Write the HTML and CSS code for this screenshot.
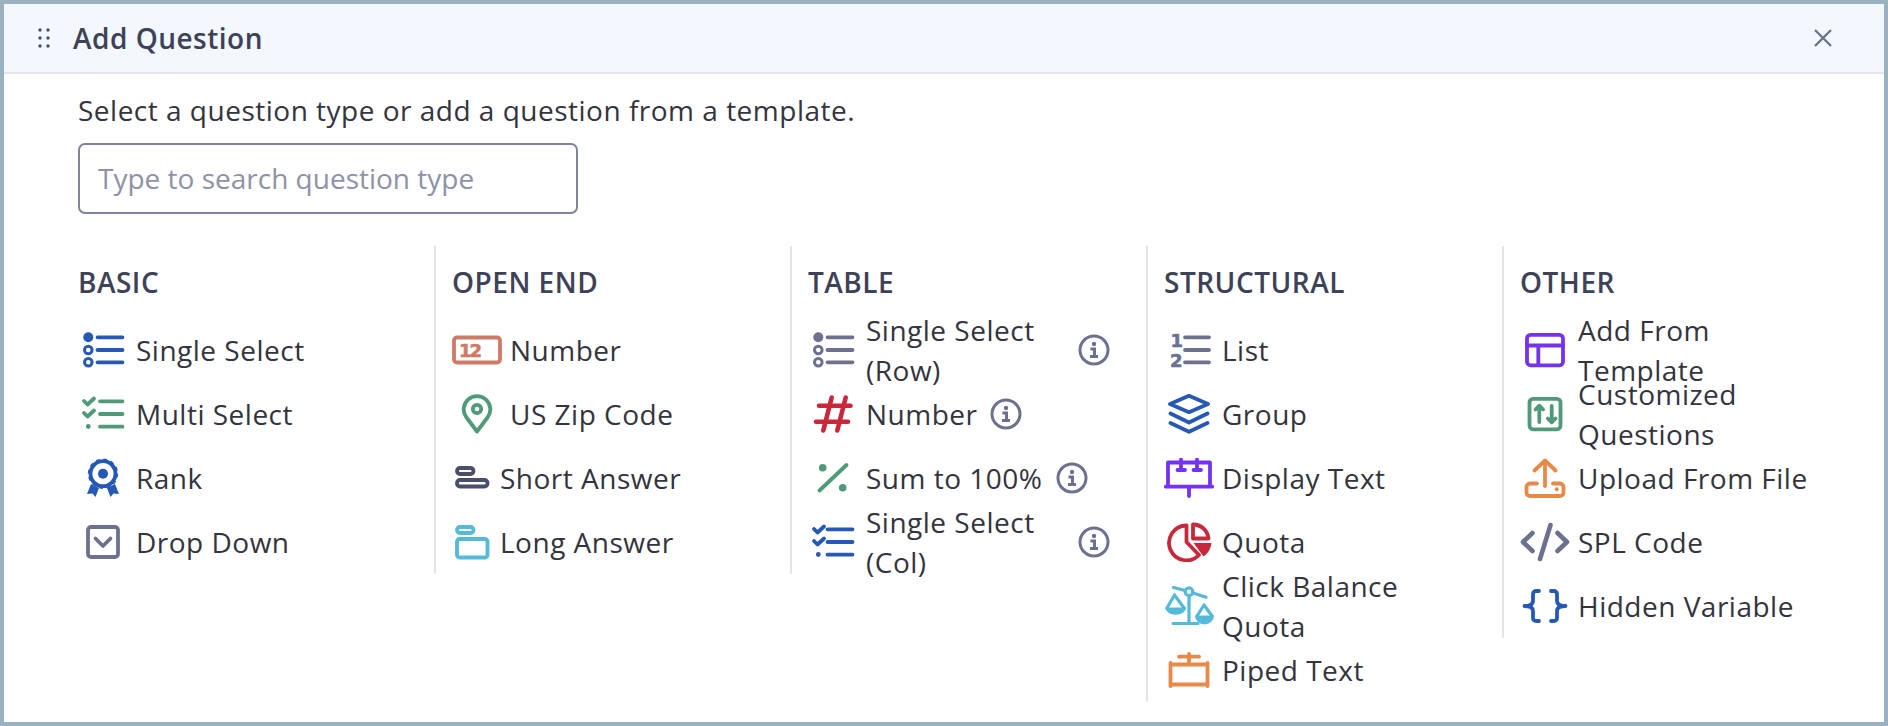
FILE: index.html
```html
<!DOCTYPE html>
<html lang="en">
<head>
<meta charset="utf-8">
<title>Add Question</title>
<link rel="stylesheet" href="styles.css">
</head>
<body>
<section class="dialog">
  <header class="dialog-head">
    <svg class="grip" viewBox="0 0 12 22"><circle class="f" cx="2" cy="3" r="1.7"/><circle class="f" cx="10" cy="3" r="1.7"/><circle class="f" cx="2" cy="11" r="1.7"/><circle class="f" cx="10" cy="11" r="1.7"/><circle class="f" cx="2" cy="19" r="1.7"/><circle class="f" cx="10" cy="19" r="1.7"/></svg>
    <h2 class="dialog-title">Add Question</h2>
    <button class="close" aria-label="Close"><svg viewBox="0 0 20 20"><path d="M2 2l16 16M18 2L2 18"/></svg></button>
  </header>
  <div class="dialog-body">
    <p class="prompt">Select a question type or add a question from a template.</p>
    <input class="search" type="text" placeholder="Type to search question type">
    <div class="columns">

      <div class="col">
        <h3 class="col-title">BASIC</h3>
        <ul class="items">
          <li class="item"><svg class="ico blue" viewBox="0 0 50 40"><circle class="f" cx="10.3" cy="7.3" r="5"/><circle class="thin" cx="10.3" cy="20" r="3.8"/><circle class="thin" cx="10.3" cy="32.3" r="3.8"/><path d="M19.5 7.3h25M19.5 20h25M19.5 32.3h25"/></svg><span class="label">Single Select</span></li>
          <li class="item"><svg class="ico green" viewBox="0 0 50 40"><path d="M6 7l3.5 3.5L16 4.5M6 19l3.5 3.5L16 16.5M22 7.3h22.500M22 20h22.500M22 32.700h22.500"/><circle class="f" cx="10.300" cy="32.500" r="2.400"/></svg><span class="label">Multi Select</span></li>
          <li class="item"><svg class="ico blue" viewBox="0 0 50 40"><circle cx="25" cy="15.700" r="12.500"/><circle class="dash" cx="25" cy="15.700" r="14"/><circle class="f" cx="25" cy="15.700" r="5"/><path class="f" d="M13 26l8 4-3.500 9-3-3.500-5.500.5zM37 26l-8 4 3.500 9 3-3.500 5.500.5z"/></svg><span class="label">Rank</span></li>
          <li class="item"><svg class="ico gray" viewBox="0 0 50 40"><rect x="10" y="5" width="30" height="30" rx="3"/><path d="M17.500 16.500l7.500 7.500 7.500-7.500"/></svg><span class="label">Drop Down</span></li>
        </ul>
      </div>

      <div class="col">
        <h3 class="col-title">OPEN END</h3>
        <ul class="items">
          <li class="item"><svg class="ico salmon" viewBox="0 0 50 40"><rect x="2" y="7.500" width="46" height="25" rx="3"/><text class="ico-num" x="7" y="26.500" textLength="23">12</text></svg><span class="label">Number</span></li>
          <li class="item"><svg class="ico green" viewBox="0 0 50 40"><path d="M25 37.500L14.500 23.500A13.300 13.300 0 1 1 35.500 23.500Z"/><circle cx="25" cy="15" r="4.200"/></svg><span class="label">US Zip Code</span></li>
          <li class="item"><svg class="ico ico-narrow ink" viewBox="0 0 40 40"><rect x="5" y="10" width="16.500" height="6" rx="3"/><rect x="5" y="22" width="30.500" height="6.500" rx="3"/></svg><span class="label">Short Answer</span></li>
          <li class="item"><svg class="ico ico-narrow sky" viewBox="0 0 40 40"><rect x="5" y="5" width="16.500" height="6" rx="3"/><rect x="5" y="17" width="30.500" height="18.500" rx="2.500"/></svg><span class="label">Long Answer</span></li>
        </ul>
      </div>

      <div class="col">
        <h3 class="col-title">TABLE</h3>
        <ul class="items">
          <li class="item"><svg class="ico gray" viewBox="0 0 50 40"><circle class="f" cx="10.300" cy="7.300" r="5"/><circle class="thin" cx="10.300" cy="20" r="3.800"/><circle class="thin" cx="10.300" cy="32.300" r="3.800"/><path d="M19.500 7.300h25M19.500 20h25M19.500 32.300h25"/></svg><span class="label">Single Select (Row)</span><svg class="info" viewBox="0 0 32 32"><circle cx="16" cy="16" r="14"/><circle class="f" cx="16" cy="10" r="2.200"/><path class="i" d="M12.500 15h4v7.500M12 22.500h8"/></svg></li>
          <li class="item"><svg class="ico red" viewBox="0 0 50 40"><path class="thick" d="M23.700 3.500L15.300 36.500M37.700 3.500L29.300 36.500M11 11.700h31.500M8 27.700h32"/></svg><span class="label">Number</span><svg class="info" viewBox="0 0 32 32"><circle cx="16" cy="16" r="14"/><circle class="f" cx="16" cy="10" r="2.200"/><path class="i" d="M12.500 15h4v7.500M12 22.500h8"/></svg></li>
          <li class="item"><svg class="ico green" viewBox="0 0 50 40"><circle class="f" cx="14.700" cy="9.700" r="3.800"/><circle class="f" cx="34.700" cy="29.700" r="3.800"/><path d="M38.500 7L11.500 32.500"/></svg><span class="label">Sum to 100%</span><svg class="info" viewBox="0 0 32 32"><circle cx="16" cy="16" r="14"/><circle class="f" cx="16" cy="10" r="2.200"/><path class="i" d="M12.500 15h4v7.500M12 22.500h8"/></svg></li>
          <li class="item"><svg class="ico blue" viewBox="0 0 50 40"><path d="M6 7l3.500 3.500L16 4.500M6 19l3.500 3.500L16 16.500M19.500 7.300h25M19.500 20h25M19.500 32.700h25"/><circle class="f" cx="10.300" cy="32.500" r="2.400"/></svg><span class="label">Single Select (Col)</span><svg class="info" viewBox="0 0 32 32"><circle cx="16" cy="16" r="14"/><circle class="f" cx="16" cy="10" r="2.200"/><path class="i" d="M12.500 15h4v7.500M12 22.500h8"/></svg></li>
        </ul>
      </div>

      <div class="col">
        <h3 class="col-title">STRUCTURAL</h3>
        <ul class="items">
          <li class="item"><svg class="ico gray" viewBox="0 0 50 40"><text class="ico-list" x="6.500" y="16.500">1</text><text class="ico-list" x="6" y="36.500">2</text><path d="M21 7.300h24M21 20h24M21 32.300h24"/></svg><span class="label">List</span></li>
          <li class="item"><svg class="ico blue" viewBox="0 0 50 40"><path d="M25 1.800L44 10 25 18.200 6 10zM6.500 19.500L25 28.500l18.500-9M6.500 29L25 37.800 43.500 29"/></svg><span class="label">Group</span></li>
          <li class="item"><svg class="ico purple" viewBox="0 0 50 40"><path d="M4 28V4.500h42V28M1.800 28.700h46.400M25 29v9M17 1.500V12M33 1.500V12M13.500 12h7.500M29.500 12h7.500"/></svg><span class="label">Display Text</span></li>
          <li class="item"><svg class="ico red" viewBox="0 0 50 40"><path d="M22.500 3.500V20L35 33A17.400 17.400 0 1 1 22.500 3.500Z"/><path d="M29 2.500A15.500 15.500 0 0 1 44.500 16.500H29Z"/><path class="f" d="M29.500 21H47.500A19 19 0 0 1 39.500 34.500Z"/></svg><span class="label">Quota</span></li>
          <li class="item"><svg class="ico sky" viewBox="0 0 50 40"><path class="thinline" d="M9.500 1.500L21 4.500M29 7L42 11.300M25 10V37M9 37.500H34M10.500 9L3 22M10.500 9L20 22M40 19L33 30M40 19L48 30"/><circle class="thinline" cx="25" cy="5.700" r="3.800"/><path class="f" d="M1 21.500H22.500A10.800 8 0 0 1 1 21.500ZM31 29.500H50A9.500 9 0 0 1 31 29.500Z"/></svg><span class="label">Click Balance Quota</span></li>
          <li class="item"><svg class="ico orange" viewBox="0 0 50 40"><path d="M6.500 13v23M43.500 13v23M6.500 14.500h37M6.500 34.500h37M25 4v10M15 6.700h20"/></svg><span class="label">Piped Text</span></li>
        </ul>
      </div>

      <div class="col">
        <h3 class="col-title">OTHER</h3>
        <ul class="items">
          <li class="item"><svg class="ico purple" viewBox="0 0 50 40"><rect x="7" y="4.800" width="36" height="30.500" rx="3.500"/><path d="M7 15.500h36M18.300 15.500v19.500"/></svg><span class="label">Add From Template</span></li>
          <li class="item"><svg class="ico green" viewBox="0 0 50 40"><rect x="9.500" y="4.800" width="31" height="30.500" rx="3.500"/><path d="M19.300 12v16M15.500 15.500l3.800-3.800 3.800 3.800M31.700 12v16M27.900 24.500l3.800 3.800 3.800-3.800"/></svg><span class="label">Customized Questions</span></li>
          <li class="item"><svg class="ico orange" viewBox="0 0 50 40"><path d="M25 28V3M14.500 12.500L25 2.500l10.500 10M17 25.500H10a3.500 3.500 0 0 0-3.500 3.500v5.500a3.500 3.500 0 0 0 3.500 3.500h30a3.500 3.500 0 0 0 3.500-3.500V29a3.500 3.500 0 0 0-3.500-3.500H33"/><circle class="f" cx="36.700" cy="31.300" r="2"/></svg><span class="label">Upload From File</span></li>
          <li class="item"><svg class="ico gray" viewBox="0 0 50 40"><path class="thick" d="M12.500 11L3 20l9.500 9M37.500 11l9.500 9-9.500 9M30.500 3L20 37"/></svg><span class="label">SPL Code</span></li>
          <li class="item"><svg class="ico blue" viewBox="0 0 50 40"><path d="M19 5h-3a3 3 0 0 0-3 3v7c0 3-2.500 5-8.500 5 6 0 8.500 2 8.500 5v7a3 3 0 0 0 3 3h3M31 5h3a3 3 0 0 1 3 3v7c0 3 2.500 5 8.500 5-6 0-8.500 2-8.500 5v7a3 3 0 0 1-3 3h-3"/></svg><span class="label">Hidden Variable</span></li>
        </ul>
      </div>

    </div>
  </div>
</section>
</body>
</html>
```
FILE: styles.css
```css
* { box-sizing: border-box; }
html, body { margin: 0; height: 100%; background: #fff; }
body { font-family: "Open Sans", "Liberation Sans", sans-serif; color: #33343e; }

.dialog {
  height: 100vh;
  border: 4px solid #9ab2bf;
  background: #fff;
  overflow: hidden;
}

.dialog-head {
  display: flex;
  align-items: center;
  height: 70px;
  padding: 0 51px 0 34px;
  background: #f3f8fe;
  border-bottom: 2px solid #e3e6ea;
}
.grip { width: 12px; height: 22px; flex: none; color: #4a4e69; }
.grip .f { fill: currentColor; }
.dialog-title {
  margin: 0 0 0 23px;
  font-size: 28px;
  font-weight: 600;
  letter-spacing: 0.5px;
  line-height: 36px;
  color: #3e4259;
}
.close {
  margin-left: auto;
  width: 20px;
  height: 20px;
  padding: 0;
  border: 0;
  background: none;
  color: #6c7190;
}
.close svg { display: block; width: 20px; height: 20px; fill: none; stroke: currentColor; stroke-width: 2.4; }

.dialog-body { padding: 16px 0 0 74px; }
.prompt { margin: 0; font-size: 28px; letter-spacing: 0.5px; line-height: 40px; }
.search {
  display: block;
  width: 500px;
  height: 71px;
  margin-top: 13px;
  padding: 0 18px 2px;
  border: 2px solid #7f849c;
  border-radius: 7px;
  font: inherit;
  font-size: 28px;
  color: #33343e;
  background: #fff;
}
.search::placeholder { color: #8e92a8; opacity: 1; }

.columns { display: flex; align-items: flex-start; margin-top: 32px; }
.col { flex: none; width: 356px; padding-left: 16px; border-left: 2px solid #e3e6ea; }
.col:first-child { padding-left: 0; border-left: 0; }
.col-title {
  margin: 0;
  height: 72px;
  font-size: 28px;
  font-weight: 600;
  letter-spacing: 0.5px;
  line-height: 72px;
  color: #3e4259;
}
.items { list-style: none; margin: 0; padding: 0; }
.item {
  display: flex;
  align-items: center;
  gap: 8px;
  width: 302px;
  height: 64px;
  font-size: 28px;
  letter-spacing: 0.5px;
  line-height: 40px;
}
.label { min-width: 0; }

.ico {
  flex: none;
  width: 50px;
  height: 40px;
  fill: none;
  stroke: currentColor;
  stroke-width: 3.8;
  stroke-linecap: round;
  stroke-linejoin: round;
}
.ico-narrow { width: 40px; }
.ico .f { fill: currentColor; stroke: none; }
.ico .thin { stroke-width: 3; }
.ico .thick { stroke-width: 4.6; }
.ico .thinline { stroke-width: 3.2; }
.ico .dash { stroke-width: 2.4; stroke-linecap: butt; stroke-dasharray: 3.6 3.73; }
.ico-num, .ico-list {
  stroke: currentColor;
  stroke-width: 0.6;
  fill: currentColor;
  font-family: "DejaVu Sans", sans-serif;
  font-weight: 700;
  letter-spacing: 0;
}
.ico text { stroke-width: 0.6; }
.ico-num { font-size: 18px; }
.ico-list { font-size: 18px; }

.blue { color: #2659b5; }
.green { color: #4f9a78; }
.gray { color: #6c7190; }
.salmon { color: #d07a66; }
.ink { color: #4a4e69; }
.sky { color: #55b9d9; }
.red { color: #c9283a; }
.purple { color: #7433f0; }
.orange { color: #e78a48; }

.info {
  flex: none;
  width: 32px;
  height: 32px;
  margin-left: 5px;
  fill: none;
  stroke: #6c7190;
  stroke-width: 3;
}
.info .f { fill: #6c7190; stroke: none; }
.info .i { stroke-width: 3; }
```
